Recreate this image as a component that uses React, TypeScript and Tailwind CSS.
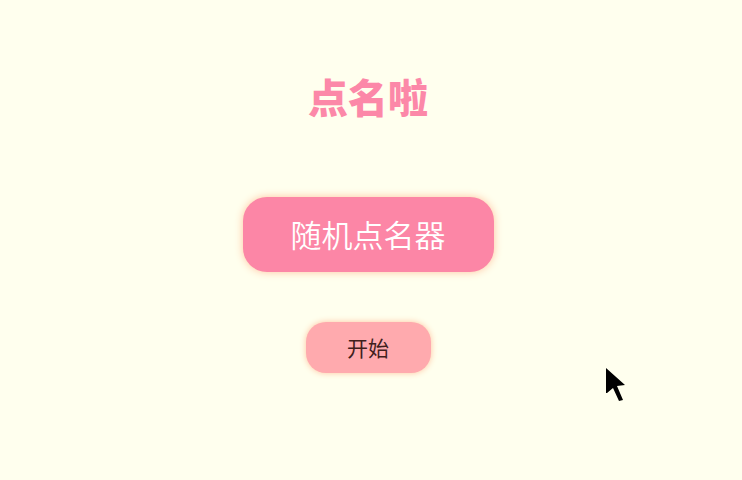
import { useState } from 'react'

export default function App () {
  const [running, setRunning] = useState(false)

  return (
    <main
      className="relative flex flex-col items-center min-h-screen bg-[#ffffee] pt-17 pr-1.5
      font-['Noto_Sans_CJK_SC',sans-serif]"
    >
      <h1 className="text-[40px] leading-14 font-black text-[#fc88a8]">点名啦</h1>
      <div
        className="flex justify-center items-center mt-[73px] h-[75px] w-[251px] rounded-3xl bg-[#fc86a6]
        text-[31px] font-[350] text-white shadow-[0_0_8px_#ffc4a0]"
      >
        随机点名器
      </div>
      <button
        className="mt-[50px] h-[51px] w-[125px] rounded-[20px] bg-[#ffaaae]
        text-[21px] text-[#40201c] shadow-[0_0_6px_#ffc4a0]"
        onClick={() => setRunning(!running)}
      >
        开始
      </button>
      <svg
        className="absolute left-[606px] top-[367px] w-5 h-[34px]"
        viewBox="0 0 20 34"
        aria-hidden="true"
      >
        <path d="M0 1 L19 18 L11 19 L17 33 L13 34 L7 21 L1 26 L0 26 Z" fill="#000"/>
      </svg>
    </main>
  )
}
